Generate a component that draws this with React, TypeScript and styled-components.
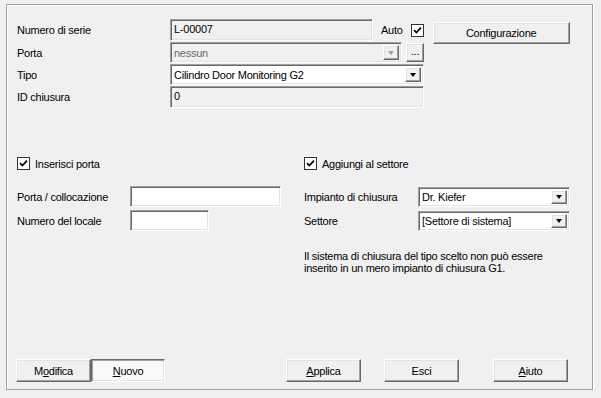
import styled, { createGlobalStyle } from "styled-components";

const Global = createGlobalStyle`
  html, body {
    margin: 0;
    background: #f0f0f0;
  }
  body {
    font-family: "Liberation Sans", Arial, sans-serif;
    font-size: 11px;
    letter-spacing: -0.25px;
    color: #000;
  }
  #root {
    padding: 4px 0 0 6px;
  }
`;

const sunken = `
  box-sizing: border-box;
  border: 1px solid;
  border-color: #a0a0a0 #ffffff #ffffff #a0a0a0;
  box-shadow: inset 1px 1px 0 #696969, inset -1px -1px 0 #e3e3e3;
`;

const raised = `
  box-sizing: border-box;
  border: 1px solid;
  border-color: #ffffff #696969 #696969 #ffffff;
  box-shadow: inset -1px -1px 0 #a0a0a0, inset 1px 1px 0 #e3e3e3;
`;

const Panel = styled.div`
  box-sizing: border-box;
  width: 587px;
  height: 386px;
  border: 1px solid #a0a0a0;
  box-shadow: 1px 1px 0 #fff, inset 1px 1px 0 #fff;
  display: flex;
  flex-direction: column;
  padding-bottom: 7px;
`;

const TopArea = styled.div`
  display: flex;
  flex-direction: column;
  gap: 1px;
  padding: 14px 0 0 10px;
`;

const Row = styled.div<{ $h: number }>`
  display: flex;
  align-items: center;
  height: ${(p) => p.$h}px;
`;

const Label = styled.span<{ $w: number }>`
  width: ${(p) => p.$w}px;
  flex: none;
  white-space: nowrap;
`;

const TextBox = styled.div<{ $w: number; $h: number; $readOnly?: boolean }>`
  ${sunken}
  width: ${(p) => p.$w}px;
  height: ${(p) => p.$h}px;
  background: ${(p) => (p.$readOnly ? "#f0f0f0" : "#ffffff")};
  padding: 2px 3px;
  line-height: 14px;
  white-space: nowrap;
  overflow: hidden;
`;

const Combo = styled.div<{ $w: number; $h: number; $disabled?: boolean }>`
  ${sunken}
  width: ${(p) => p.$w}px;
  height: ${(p) => p.$h}px;
  background: ${(p) => (p.$disabled ? "#f0f0f0" : "#ffffff")};
  color: ${(p) => (p.$disabled ? "#6d6d6d" : "#000")};
  display: flex;
  align-items: center;
  padding: 2px 2px 2px 3px;
`;

const ComboText = styled.span`
  flex: 1;
  white-space: nowrap;
  overflow: hidden;
`;

const DropButton = styled.span<{ $disabled?: boolean }>`
  ${raised}
  width: 16px;
  align-self: stretch;
  background: #f0f0f0;
  display: flex;
  align-items: center;
  justify-content: center;
  &::after {
    content: "";
    border-left: 3.5px solid transparent;
    border-right: 3.5px solid transparent;
    border-top: 4px solid ${(p) => (p.$disabled ? "#a0a0a0" : "#000")};
  }
`;

const Button = styled.button<{ $w: number; $h: number; $pressed?: boolean }>`
  ${raised}
  ${(p) =>
    p.$pressed &&
    `
    border-color: #696969 #ffffff #ffffff #696969;
    box-shadow: inset 1px 1px 0 #a0a0a0, inset -1px -1px 0 #e3e3e3;
  `}
  width: ${(p) => p.$w}px;
  height: ${(p) => p.$h}px;
  flex: none;
  background: ${(p) => (p.$pressed ? "#f9f9f9" : "#f0f0f0")};
  font-family: inherit;
  font-size: 11px;
  letter-spacing: inherit;
  color: #000;
  padding: 0;
  u {
    text-decoration-thickness: 1px;
    text-underline-offset: 1px;
  }
`;

const Dots = styled(Button)`
  align-self: flex-start;
  margin: 1px 0 0 4px;
  display: flex;
  justify-content: center;
  align-items: flex-end;
  padding-bottom: 4px;
  line-height: 1;
`;

const AutoText = styled.span`
  margin-left: 8px;
`;

const ConfigButton = styled(Button)`
  align-self: flex-start;
  margin: 3px 0 0 9px;
`;

const Box = styled.span`
  box-sizing: border-box;
  width: 13px;
  height: 13px;
  flex: none;
  border: 1px solid #333;
  background: #fff;
  display: flex;
  align-items: center;
  justify-content: center;
`;

const CheckWrap = styled.span<{ $ml?: number }>`
  display: inline-flex;
  align-items: center;
  gap: 5px;
  margin-left: ${(p) => p.$ml ?? 0}px;
`;

const Check = ({ label, ml }: { label?: string; ml?: number }) => (
  <CheckWrap $ml={ml}>
    <Box>
      <svg width="9" height="9" viewBox="0 0 9 9">
        <path d="M1 4.2 L3.4 6.6 L8 1.6" fill="none" stroke="#000" strokeWidth="1.7" />
      </svg>
    </Box>
    {label && <span>{label}</span>}
  </CheckWrap>
);

const MidArea = styled.div`
  display: flex;
  padding: 49px 0 0 10px;
`;

const Column = styled.div<{ $w?: number }>`
  display: flex;
  flex-direction: column;
  gap: 3px;
  width: ${(p) => (p.$w ? `${p.$w}px` : "auto")};
`;

const CheckRow = styled.div`
  height: 13px;
  display: flex;
  align-items: center;
  margin-bottom: 13px;
`;

const Note = styled.p`
  margin: 16px 0 0;
  line-height: 12px;
`;

const ButtonBar = styled.div`
  margin-top: auto;
  display: flex;
  padding-left: 9px;
`;

const Spacer = styled.span<{ $w: number }>`
  width: ${(p) => p.$w}px;
  flex: none;
`;

export default function App() {
  return (
    <>
      <Global />
      <Panel>
        <TopArea>
          <Row $h={22}>
            <Label $w={153}>Numero di serie</Label>
            <TextBox $w={203} $h={22} $readOnly>
              L-00007
            </TextBox>
            <AutoText>Auto</AutoText>
            <Check ml={8} />
            <ConfigButton $w={137} $h={22}>
              Configurazione
            </ConfigButton>
          </Row>
          <Row $h={21}>
            <Label $w={153}>Porta</Label>
            <Combo $w={232} $h={21} $disabled>
              <ComboText>nessun</ComboText>
              <DropButton $disabled />
            </Combo>
            <Dots $w={18} $h={19}>...</Dots>
          </Row>
          <Row $h={21}>
            <Label $w={153}>Tipo</Label>
            <Combo $w={254} $h={21}>
              <ComboText>Cilindro Door Monitoring G2</ComboText>
              <DropButton />
            </Combo>
          </Row>
          <Row $h={22}>
            <Label $w={153}>ID chiusura</Label>
            <TextBox $w={254} $h={22} $readOnly>
              0
            </TextBox>
          </Row>
        </TopArea>

        <MidArea>
          <Column $w={287}>
            <CheckRow>
              <Check label="Inserisci porta" />
            </CheckRow>
            <Row $h={21}>
              <Label $w={113}>Porta / collocazione</Label>
              <TextBox $w={151} $h={21} />
            </Row>
            <Row $h={21}>
              <Label $w={113}>Numero del locale</Label>
              <TextBox $w={79} $h={21} />
            </Row>
          </Column>
          <Column>
            <CheckRow>
              <Check label="Aggiungi al settore" />
            </CheckRow>
            <Row $h={21}>
              <Label $w={114}>Impianto di chiusura</Label>
              <Combo $w={152} $h={20}>
                <ComboText>Dr. Kiefer</ComboText>
                <DropButton />
              </Combo>
            </Row>
            <Row $h={21}>
              <Label $w={114}>Settore</Label>
              <Combo $w={152} $h={20}>
                <ComboText>[Settore di sistema]</ComboText>
                <DropButton />
              </Combo>
            </Row>
            <Note>
              Il sistema di chiusura del tipo scelto non può essere
              <br />
              inserito in un mero impianto di chiusura G1.
            </Note>
          </Column>
        </MidArea>

        <ButtonBar>
          <Button $w={75} $h={23}>
            M<u>o</u>difica
          </Button>
          <Button $w={74} $h={23} $pressed>
            <u>N</u>uovo
          </Button>
          <Spacer $w={121} />
          <Button $w={75} $h={23}>
            <u>A</u>pplica
          </Button>
          <Spacer $w={23} />
          <Button $w={75} $h={23}>
            Esci
          </Button>
          <Spacer $w={34} />
          <Button $w={75} $h={23}>
            <u>A</u>iuto
          </Button>
        </ButtonBar>
      </Panel>
    </>
  );
}
